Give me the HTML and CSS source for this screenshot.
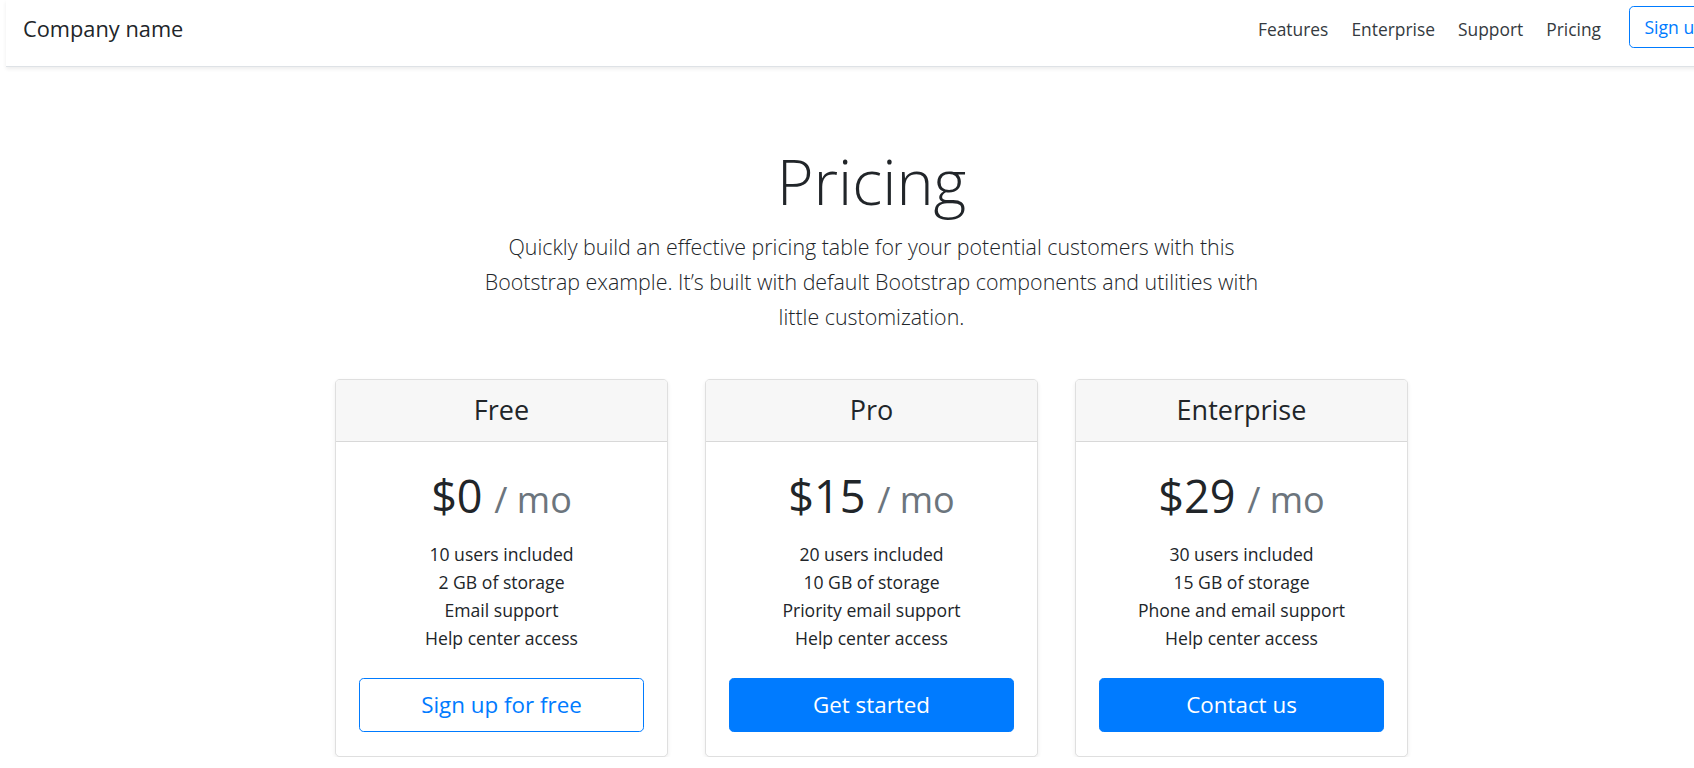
FILE: index.html
```html
<!DOCTYPE html>
<html lang="en">
<head>
    <meta charset="UTF-8">
    <meta name="viewport" content="width=device-width, initial-scale=1.0">
    <title>Pricing example</title>
    <link rel="stylesheet" href="styles.css">
</head>
<body>
    <div class="page">
        <div class="navbar">
            <h5 class="brand">Company name</h5>
            <nav class="nav-links">
                <a class="nav-link" href="#">Features</a>
                <a class="nav-link" href="#">Enterprise</a>
                <a class="nav-link" href="#">Support</a>
                <a class="nav-link" href="#">Pricing</a>
            </nav>
            <a class="btn btn-outline" href="#">Sign up</a>
        </div>

        <div class="pricing-header">
            <h1 class="display-4">Pricing</h1>
            <p class="lead">Quickly build an effective pricing table for your potential customers with this Bootstrap example. It’s built with default Bootstrap components and utilities with little customization.</p>
        </div>

        <div class="card-deck">
            <div class="card">
                <div class="card-header">
                    <h4>Free</h4>
                </div>
                <div class="card-body">
                    <h1 class="price">$0 <small>/ mo</small></h1>
                    <ul class="features">
                        <li>10 users included</li>
                        <li>2 GB of storage</li>
                        <li>Email support</li>
                        <li>Help center access</li>
                    </ul>
                    <button class="btn btn-lg btn-outline">Sign up for free</button>
                </div>
            </div>
            <div class="card">
                <div class="card-header">
                    <h4>Pro</h4>
                </div>
                <div class="card-body">
                    <h1 class="price">$15 <small>/ mo</small></h1>
                    <ul class="features">
                        <li>20 users included</li>
                        <li>10 GB of storage</li>
                        <li>Priority email support</li>
                        <li>Help center access</li>
                    </ul>
                    <button class="btn btn-lg btn-primary">Get started</button>
                </div>
            </div>
            <div class="card">
                <div class="card-header">
                    <h4>Enterprise</h4>
                </div>
                <div class="card-body">
                    <h1 class="price">$29 <small>/ mo</small></h1>
                    <ul class="features">
                        <li>30 users included</li>
                        <li>15 GB of storage</li>
                        <li>Phone and email support</li>
                        <li>Help center access</li>
                    </ul>
                    <button class="btn btn-lg btn-primary">Contact us</button>
                </div>
            </div>
        </div>
    </div>
</body>
</html>
```

FILE: styles.css
```css
html,
body {
    margin: 0;
    overflow: hidden; /* page is a bit wider than the window */
}

body {
    font-family: "Open Sans", "Noto Sans", sans-serif;
    font-size: 18.7px;
    line-height: 1.5;
    color: #212529;
    background: #fff;
}

.page {
    width: 1753px;
    margin-left: -5px;
}

/* top bar */
.navbar {
    display: flex;
    align-items: center;
    margin-left: 11px;
    padding: 6px 28px 18px 17px;
    background: #fff;
    border-bottom: 1px solid #dee2e6;
    box-shadow: 0 2px 4px rgba(0, 0, 0, 0.075);
    margin-bottom: 18.7px;
}

.brand {
    margin: 0 auto 0 0;
    padding-top: 4px;
    font-size: 21.8px;
    font-weight: 400;
    line-height: 1.2;
}

.nav-links {
    display: flex;
    padding-top: 4px;
    margin-right: 16.9px;
}

.nav-link {
    padding: 0 11.5px;
    color: #343a40;
    text-decoration: none;
    font-size: 17.4px;
    line-height: 28px;
}

.btn {
    display: inline-block;
    font-family: inherit;
    font-size: 17.6px;
    line-height: 26px;
    padding: 7px 14px;
    border: 1px solid #007bff;
    border-radius: 4.7px;
    text-align: center;
    text-decoration: none;
    cursor: pointer;
}

.btn-outline {
    color: #007bff;
    background: transparent;
}

.btn-primary {
    color: #fff;
    background: #007bff;
}

.btn-lg {
    display: block;
    width: 100%;
    font-size: 22.4px;
    line-height: 34px;
    padding: 9.3px 18.7px;
}

/* heading */
.pricing-header {
    max-width: 817px;
    margin: 0 auto;
    padding: 56px 17.5px 28px;
    text-align: center;
}

.display-4 {
    margin: 0 0 9.3px;
    font-size: 63px;
    font-weight: 300;
    line-height: 78px;
}

.lead {
    margin: 0;
    font-size: 21.4px;
    font-weight: 300;
    line-height: 35px;
}

/* cards */
.card-deck {
    display: grid;
    grid-template-columns: repeat(3, 333px);
    gap: 37px;
    justify-content: center;
    margin-top: 17px;
}

.card {
    border: 1px solid rgba(0, 0, 0, 0.125);
    border-radius: 4.7px;
    box-shadow: 0 2px 4px rgba(0, 0, 0, 0.075);
    text-align: center;
    overflow: hidden;
}

.card-header {
    padding: 13.5px 23.3px;
    background: #f7f7f7;
    border-bottom: 1px solid rgba(0, 0, 0, 0.125);
}

.card-header h4 {
    margin: 0;
    font-size: 27px;
    font-weight: 400;
    line-height: 33.6px;
}

.card-body {
    padding: 26.3px 23.3px 23.3px;
}

.price {
    margin: 0;
    font-size: 45px;
    font-weight: 400;
    line-height: 56px;
}

.price small {
    font-size: 80%;
    color: #6c757d;
}

.features {
    list-style: none;
    padding: 0;
    margin: 12px 0 26px;
    font-size: 17.6px;
    line-height: 28px;
}
```
